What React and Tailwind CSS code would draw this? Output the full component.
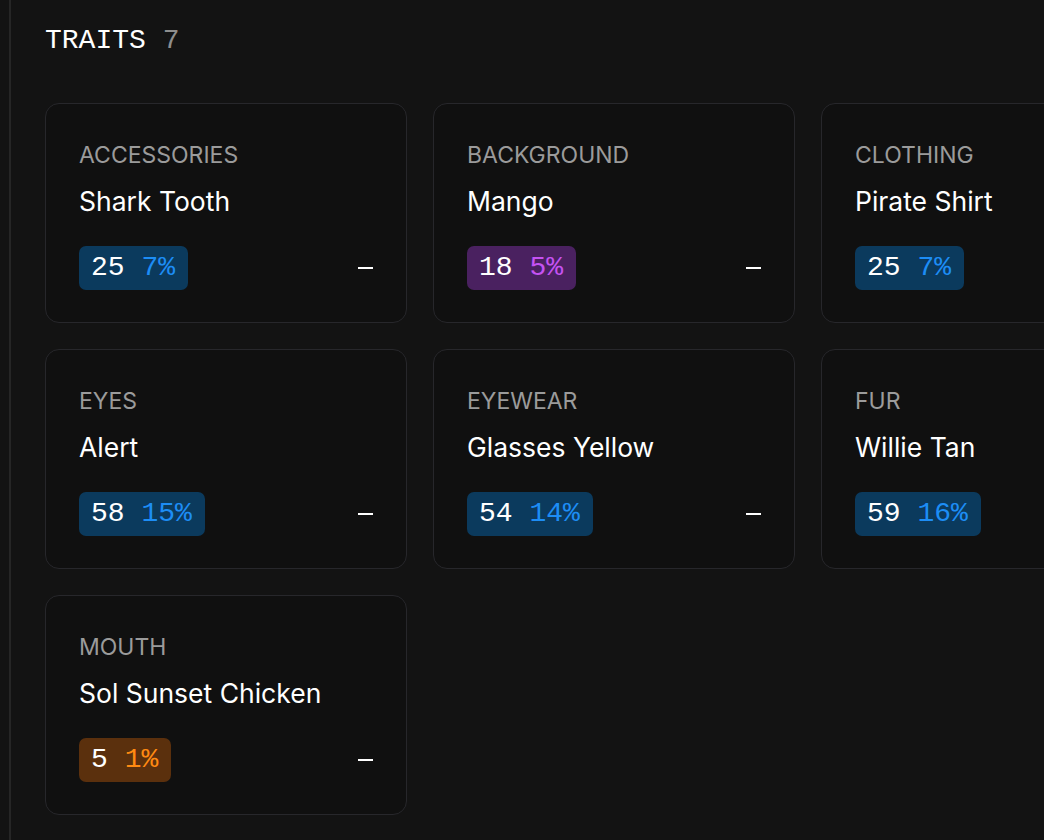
import React from "react";

const traits = [
  { label: "ACCESSORIES", value: "Shark Tooth", count: "25", pct: "7%", tone: "blue" },
  { label: "BACKGROUND", value: "Mango", count: "18", pct: "5%", tone: "purple" },
  { label: "CLOTHING", value: "Pirate Shirt", count: "25", pct: "7%", tone: "blue" },
  { label: "EYES", value: "Alert", count: "58", pct: "15%", tone: "blue" },
  { label: "EYEWEAR", value: "Glasses Yellow", count: "54", pct: "14%", tone: "blue" },
  { label: "FUR", value: "Willie Tan", count: "59", pct: "16%", tone: "blue" },
  { label: "MOUTH", value: "Sol Sunset Chicken", count: "5", pct: "1%", tone: "orange" },
];

const tones = {
  blue: { bg: "bg-[#0b3a5d]", text: "text-[#1d8df5]" },
  purple: { bg: "bg-[#4a2160]", text: "text-[#c552f2]" },
  orange: { bg: "bg-[#5b300d]", text: "text-[#ff8a12]" },
};

const mono = { fontFamily: '"Liberation Mono", "DejaVu Sans Mono", monospace' };
const sans = { fontFamily: 'Inter, "Noto Sans", sans-serif' };

function Card({ t }) {
  const tone = tones[t.tone];
  return (
    <div className="w-[362px] rounded-[14px] border border-[#27272b] bg-[#101010] px-[33px] pb-[32px] pt-[34px]">
      <div className="text-[23px] leading-[34px] text-[#9b9b9b]" style={sans}>
        {t.label}
      </div>
      <div className="mt-[10px] text-[26.5px] leading-[38px] text-white" style={sans}>
        {t.value}
      </div>
      <div className="mt-[26px] flex items-center justify-between">
        <div
          className={`flex h-[44px] items-center rounded-[7px] pl-[12px] pr-[13px] text-[28px] leading-[44px] ${tone.bg}`}
          style={mono}
        >
          <span className="text-white">{t.count}</span>
          <span className="whitespace-pre"> </span>
          <span className={tone.text}>{t.pct}</span>
        </div>
        <div className="h-[2px] w-[15px] bg-white" />
      </div>
    </div>
  );
}

export default function App() {
  return (
    <div className="h-[840px] w-[1044px] overflow-hidden bg-[#131313] pl-[9px]">
      <div className="h-full border-l-2 border-[#262626] pl-[34px] pt-[21px]">
        <div className="text-[28px] leading-[40px] text-white" style={mono}>
          TRAITS <span className="text-[#8e8e8e]">7</span>
        </div>
        <div className="mt-[42px] grid w-[1138px] grid-cols-[362px_362px_362px] gap-[26px]">
          {traits.map((t) => (
            <Card key={t.label} t={t} />
          ))}
        </div>
      </div>
    </div>
  );
}
